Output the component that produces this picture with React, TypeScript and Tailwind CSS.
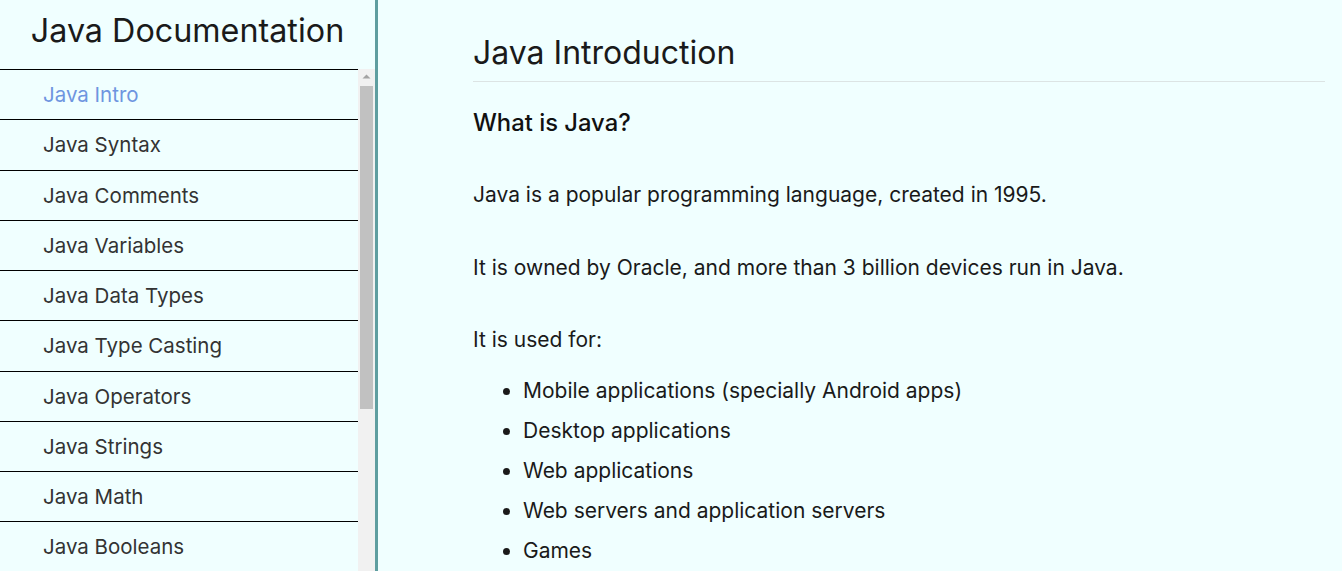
const topics = [
  "Java Intro",
  "Java Syntax",
  "Java Comments",
  "Java Variables",
  "Java Data Types",
  "Java Type Casting",
  "Java Operators",
  "Java Strings",
  "Java Math",
  "Java Booleans",
  "Java If...Else",
  "Java Switch",
  "Java While Loop",
  "Java For Loop",
  "Java Break/Continue",
];

const uses = [
  "Mobile applications (specially Android apps)",
  "Desktop applications",
  "Web applications",
  "Web servers and application servers",
  "Games",
];

// Headless screenshots hide native scrollbars, so the sidebar one is drawn here
function Scrollbar() {
  return (
    <div aria-hidden className="flex w-[17px] shrink-0 flex-col bg-[#f1f1f1]">
      <div className="flex h-[17px] shrink-0 items-center justify-center pb-[2px]">
        <svg width="9" height="5" viewBox="0 0 9 5">
          <path d="M0.5 4.5 L4.5 0.5 L8.5 4.5 Z" fill="#a3a3a3" />
        </svg>
      </div>
      <div className="mx-[2px] h-[323px] bg-[#c1c1c1]" />
    </div>
  );
}

export default function App() {
  return (
    <main className="flex h-[571px] overflow-hidden bg-[#f0ffff] font-['Inter',sans-serif] text-[#1a1a1a]">
      {/* Sidebar */}
      <nav className="flex h-full w-[378px] shrink-0 flex-col border-r-[3px] border-[#5f9ea0]">
        <header className="flex h-[69px] shrink-0 items-start justify-center pt-[12px]">
          <h1 className="text-[32.3px] leading-[38px] text-[#1a1a1a]">Java Documentation</h1>
        </header>
        <div className="flex min-h-0 flex-1">
          <ul className="min-w-0 flex-1 overflow-hidden">
            {topics.map((t, i) => (
              <li key={t} className="h-[50.25px] border-t border-black">
                <a
                  href="#"
                  className={`block pl-[43px] pt-[11px] text-[20.5px] leading-[28px] ${
                    i === 0 ? "text-[#6e95e0]" : "text-[#333]"
                  }`}
                >
                  {t}
                </a>
              </li>
            ))}
          </ul>
          <Scrollbar />
        </div>
      </nav>

      {/* Content */}
      <section className="min-w-0 flex-1 pl-[95px] pr-[17px]">
        <h2 className="mt-[33px] border-b border-[#dce4e4] pb-[9px] text-[32px] leading-[39px]">
          Java Introduction
        </h2>
        <h3 className="mt-[27px] text-[23.8px] font-medium leading-[28px] text-[#111]">What is Java?</h3>
        <p className="mt-[42px] text-[21px] leading-[31px]">
          Java is a popular programming language, created in 1995.
        </p>
        <p className="mt-[42px] text-[21px] leading-[31px]">
          It is owned by Oracle, and more than 3 billion devices run in Java.
        </p>
        <p className="mt-[41px] text-[21px] leading-[31px]">It is used for:</p>
        <ul className="mt-[16px] list-disc pl-[50px] text-[21px] leading-[40px]">
          {uses.map((u) => (
            <li key={u}>{u}</li>
          ))}
        </ul>
      </section>
    </main>
  );
}
